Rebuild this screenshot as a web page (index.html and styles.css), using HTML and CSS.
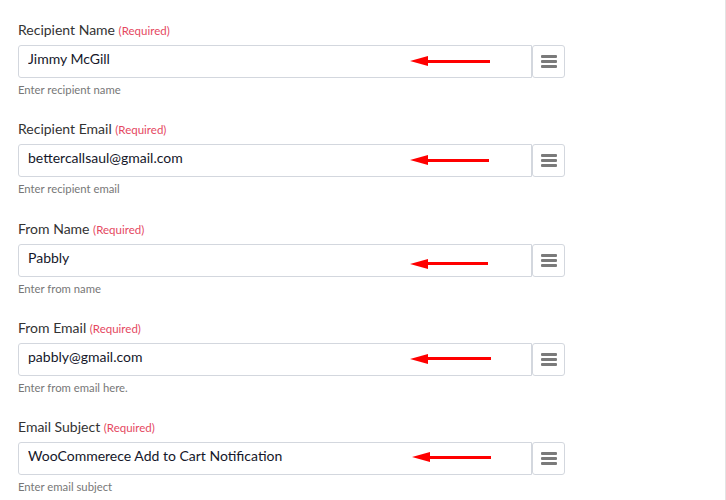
FILE: index.html
```html
<!DOCTYPE html>
<html lang="en">
<head>
  <meta charset="UTF-8" />
  <title>Email Action Setup</title>
  <link rel="stylesheet" href="styles.css">
</head>
<body>
  <div class="form-panel">

    <div class="field">
      <label class="field-label">Recipient Name <span class="required">(Required)</span></label>
      <div class="input-group">
        <input class="text-input" type="text" value="Jimmy McGill">
        <button class="menu-btn" type="button"><span></span><span></span><span></span></button>
        <div class="arrow" style="left: 392px; top: 11px; width: 80px;"></div>
      </div>
      <p class="hint">Enter recipient name</p>
    </div>

    <div class="field">
      <label class="field-label">Recipient Email <span class="required">(Required)</span></label>
      <div class="input-group">
        <input class="text-input" type="text" value="bettercallsaul@gmail.com">
        <button class="menu-btn" type="button"><span></span><span></span><span></span></button>
        <div class="arrow" style="left: 392px; top: 11px; width: 79px;"></div>
      </div>
      <p class="hint">Enter recipient email</p>
    </div>

    <div class="field">
      <label class="field-label">From Name <span class="required">(Required)</span></label>
      <div class="input-group">
        <input class="text-input" type="text" value="Pabbly">
        <button class="menu-btn" type="button"><span></span><span></span><span></span></button>
        <div class="arrow" style="left: 392px; top: 15px; width: 78px;"></div>
      </div>
      <p class="hint">Enter from name</p>
    </div>

    <div class="field">
      <label class="field-label">From Email <span class="required">(Required)</span></label>
      <div class="input-group">
        <input class="text-input" type="text" value="pabbly@gmail.com">
        <button class="menu-btn" type="button"><span></span><span></span><span></span></button>
        <div class="arrow" style="left: 392px; top: 11px; width: 81px;"></div>
      </div>
      <p class="hint">Enter from email here.</p>
    </div>

    <div class="field">
      <label class="field-label">Email Subject <span class="required">(Required)</span></label>
      <div class="input-group">
        <input class="text-input" type="text" value="WooCommerece Add to Cart Notification">
        <button class="menu-btn" type="button"><span></span><span></span><span></span></button>
        <div class="arrow" style="left: 394px; top: 10px; width: 79px;"></div>
      </div>
      <p class="hint">Enter email subject</p>
    </div>

  </div>
</body>
</html>
```

FILE: styles.css
```css
/* Basic Reset */
* {
  margin: 0;
  padding: 0;
  box-sizing: border-box;
}

body {
  font-family: Lato, "Open Sans", Arial, sans-serif;
  background: #fff;
  width: 726px;
  height: 500px;
  overflow: hidden;
  border-right: 1px solid #e3e3e3;
}

.form-panel {
  padding: 20px 0 0 18px;
  width: 565px;
}

.field {
  margin-bottom: 21.25px;
}

.field-label {
  display: block;
  height: 20px;
  font-size: 14px;
  line-height: 20px;
  color: #333;
  margin-bottom: 5px;
}

.required {
  font-size: 11.5px;
  line-height: 1;
  color: #e5485f;
}

.input-group {
  position: relative;
  display: flex;
  height: 33px;
}

.text-input {
  flex: 1;
  height: 33px;
  border: 1px solid #d3d7de;
  border-radius: 3px 0 0 3px;
  padding: 0 9px 6px;
  font-family: Lato, "Open Sans", Arial, sans-serif;
  font-size: 14px;
  color: #15172a;
  outline: none;
  background: #fff;
}

/* Field-map menu button on the right */
.menu-btn {
  width: 33px;
  height: 33px;
  border: 1px solid #d3d7de;
  border-radius: 3px;
  background: #fff;
  display: flex;
  flex-direction: column;
  align-items: center;
  justify-content: center;
  gap: 2px;
  cursor: pointer;
}

.menu-btn span {
  display: block;
  width: 16px;
  height: 3px;
  background: #7a7a7a;
  border-radius: 1px;
}

/* Red annotation arrow drawn over the input */
.arrow {
  position: absolute;
  height: 10px;
}

.arrow::before {
  content: "";
  position: absolute;
  left: 0;
  top: 0;
  border-top: 5px solid transparent;
  border-bottom: 5px solid transparent;
  border-right: 18px solid #f00;
}

.arrow::after {
  content: "";
  position: absolute;
  left: 14px;
  right: 0;
  top: 3.5px;
  height: 3px;
  background: #f00;
}

.hint {
  margin-top: 4px;
  font-size: 11.3px;
  line-height: 16px;
  color: #777;
}
```
